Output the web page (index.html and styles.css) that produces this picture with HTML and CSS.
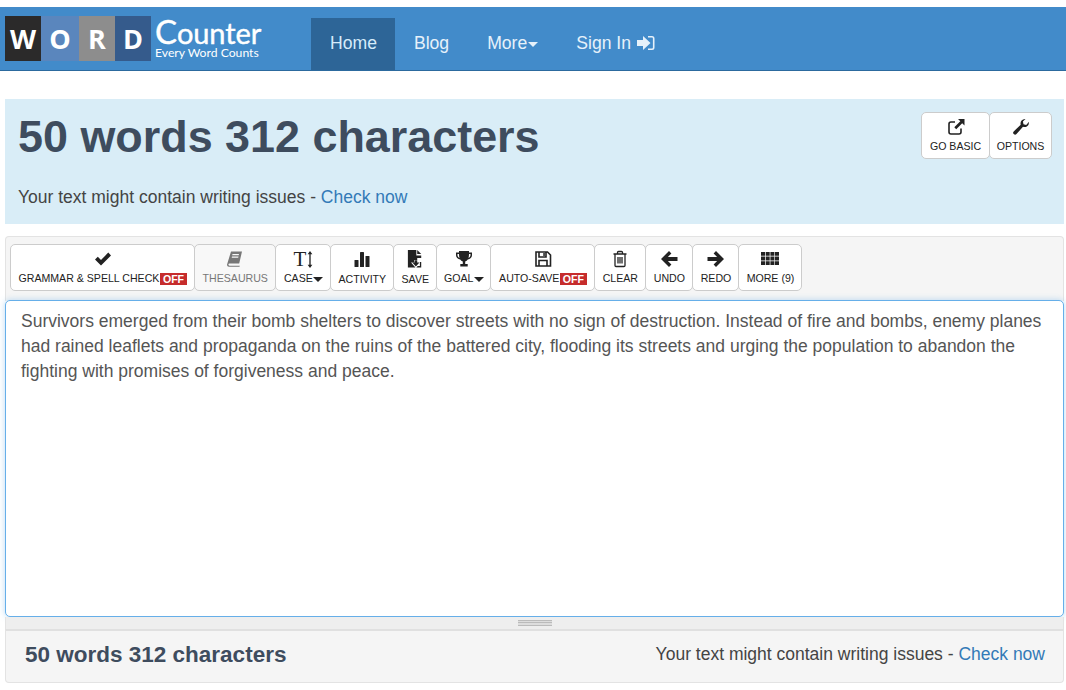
FILE: index.html
```html
<!DOCTYPE html>
<html lang="en">
<head>
<meta charset="utf-8">
<title>Word Counter</title>
<link rel="stylesheet" href="styles.css">
</head>
<body>
<nav class="navbar">
  <a class="logo" href="#">
    <span class="tiles">
      <span class="tile t-w">W</span><span class="tile t-o">O</span><span class="tile t-r">R</span><span class="tile t-d">D</span>
    </span>
    <span class="wordmark"><span class="wm-main"><span class="wm-c">C</span>ounter</span><span class="wm-sub">Every Word Counts</span></span>
  </a>
  <ul class="nav">
    <li class="nav-item active">Home</li>
    <li class="nav-item">Blog</li>
    <li class="nav-item">More<span class="caret nav-caret"></span></li>
    <li class="nav-item">Sign In<svg class="signin" viewBox="0 0 18 16"><path d="M0 5h6V1L13.500 8 6 15v-4H0z"/><path d="M11 1h4a2.500 2.500 0 0 1 2.500 2.500v9A2.500 2.500 0 0 1 15 15h-4v-1.600h4a.9.9 0 0 0 .9-.9v-9a.9.9 0 0 0-.9-.9h-4z"/></svg></li>
  </ul>
</nav>

<main class="page">
  <section class="summary">
    <div class="summary-top">
      <h1 class="count">50 words 312 characters</h1>
      <div class="tool-group">
        <button class="tool w-basic">
          <svg class="ico" viewBox="0 0 18 18"><path class="line" d="M14 10.500V14a2 2 0 0 1-2 2H4a2 2 0 0 1-2-2V6a2 2 0 0 1 2-2h4"/><path d="M11 1h6.500v6.500l-2.300-2.300-6 6-1.900-1.900 6-6z"/></svg>
          <span>GO BASIC</span>
        </button>
        <button class="tool w-options">
          <svg class="ico" viewBox="0 0 18 18"><path d="M17 4.500a4.500 4.500 0 0 1-6 4.300L4.500 16a1.900 1.900 0 0 1-2.800-2.600l7-6.700A4.500 4.500 0 0 1 13.500 1l-2.600 2.600.6 2.700 2.700.6L16.800 4z"/></svg>
          <span>OPTIONS</span>
        </button>
      </div>
    </div>
    <p class="issues">Your text might contain writing issues - <a href="#">Check now</a></p>
  </section>

  <div class="toolbar">
    <button class="tool">
      <svg class="ico" viewBox="0 0 18 18"><path d="M1 9.500l2.800-2.800 3.200 3.200 7.300-7.300L17 5.400 7 15.400z"/></svg>
      <span>GRAMMAR &amp; SPELL CHECK<b class="off">OFF</b></span>
    </button>
    <button class="tool muted">
      <svg class="ico" viewBox="0 0 18 18"><path d="M5 1.500h11l-2.800 12H3.500a1 1 0 0 0 0 2.200h10.300l-.3 1H3a2 2 0 0 1-1.800-2.600zM6.500 4l-.3 1.300h6.500L13 4zM6 6.500l-.3 1.300h6.500l.3-1.300z"/></svg>
      <span>THESAURUS</span>
    </button>
    <button class="tool">
      <span class="case-ico"><span class="case-t">T</span><svg class="case-arrow" viewBox="0 0 6 18"><path d="M3 0l2.500 3.500H3.700v11h1.800L3 18 .5 14.500h1.800v-11H.5z"/></svg></span>
      <span>CASE<span class="caret"></span></span>
    </button>
    <button class="tool low w-activity">
      <svg class="ico" viewBox="0 0 18 18"><rect x="1.500" y="10" width="4" height="7" rx=".6"/><rect x="7" y="2" width="4" height="15" rx=".6"/><rect x="12.500" y="6" width="4" height="11" rx=".6"/></svg>
      <span>ACTIVITY</span>
    </button>
    <button class="tool low w-save">
      <svg class="ico ico-tall" viewBox="0 0 18 20"><path d="M1 0h9.500v6H16v3h-4.500v2H8v3H4.500l5 5.500H1z"/><path d="M11.500 0L16 4.500h-4.500zM14.500 13.500H16V19.500H10.500L12 18h2.500zM8.500 11.500h3V14H14l-4 4.500L6 14h2.500z"/></svg>
      <span>SAVE</span>
    </button>
    <button class="tool w-goal">
      <svg class="ico" viewBox="0 0 18 18"><path d="M4 1h10v1.500h3v2.800c0 2.200-1.800 3.900-4.200 4.200-.6 1-1.500 1.700-2.600 2V14h2.500v2.500H5.300V14h2.500v-2.500c-1.100-.3-2-1-2.600-2C2.800 9.200 1 7.500 1 5.300V2.500h3zM2.500 4v1.300c0 1.200.8 2.200 2 2.600-.3-1-.5-2.300-.5-3.900zm13 0H14c0 1.600-.2 2.900-.5 3.900 1.200-.4 2-1.400 2-2.600z"/></svg>
      <span>GOAL<span class="caret"></span></span>
    </button>
    <button class="tool w-auto">
      <svg class="ico" viewBox="0 0 18 18"><path class="line" d="M2 2h11.500L16.500 5v11H2zM5 2v5h7V2M5 16v-5.500h8V16"/><rect x="9.300" y="3" width="1.500" height="3"/></svg>
      <span>AUTO-SAVE<b class="off">OFF</b></span>
    </button>
    <button class="tool w-clear">
      <svg class="ico" viewBox="0 0 18 18"><path class="thin" d="M2.500 4h13M6.500 4V2.500a1 1 0 0 1 1-1h3a1 1 0 0 1 1 1V4M4 4v11.500a1 1 0 0 0 1 1h8a1 1 0 0 0 1-1V4"/><path class="thin" d="M7 7v6.500M9 7v6.500M11 7v6.500"/></svg>
      <span>CLEAR</span>
    </button>
    <button class="tool">
      <svg class="ico" viewBox="0 0 18 18"><path d="M9 1l2.400 2.400-3.500 3.600H17.500v4H7.900l3.500 3.600L9 17 1 9z"/></svg>
      <span>UNDO</span>
    </button>
    <button class="tool w-redo">
      <svg class="ico" viewBox="0 0 18 18"><path d="M9 1L6.600 3.400 10.100 7H.5v4h9.600l-3.500 3.600L9 17l8-8z"/></svg>
      <span>REDO</span>
    </button>
    <button class="tool w-more">
      <svg class="ico" viewBox="0 0 18 18"><path d="M0 2h4v3.800H0zM4.700 2h4v3.800h-4zM9.400 2h4v3.800h-4zM14 2h4v3.800h-4zM0 6.600h4v3.800H0zM4.700 6.600h4v3.800h-4zM9.400 6.600h4v3.800h-4zM14 6.600h4v3.800h-4zM0 11.200h4V15H0zM4.700 11.200h4V15h-4zM9.400 11.200h4V15h-4zM14 11.200h4V15h-4z"/></svg>
      <span>MORE (9)</span>
    </button>
  </div>

  <div class="editor">Survivors emerged from their bomb shelters to discover streets with no sign of destruction. Instead of fire and bombs, enemy planes had rained leaflets and propaganda on the ruins of the battered city, flooding its streets and urging the population to abandon the fighting with promises of forgiveness and peace.</div>
  <div class="resizer"><span class="grip"></span></div>

  <footer class="foot">
    <strong class="foot-count">50 words 312 characters</strong>
    <span class="foot-issues">Your text might contain writing issues - <a href="#">Check now</a></span>
  </footer>
</main>
</body>
</html>
```
FILE: styles.css
```css
* { box-sizing: border-box; }
html, body { margin: 0; padding: 0; }
body {
  font-family: "Liberation Sans", Arial, sans-serif;
  color: #333;
  background: #fff;
  padding-top: 7px;
  overflow: hidden;
}
a { color: #337ab7; text-decoration: none; }

.navbar {
  display: flex;
  height: 64px;
  background: #428bca;
  border-bottom: 1px solid #2c6a9e;
}
.logo { display: flex; width: 311px; padding: 9px 0 0 5px; color: #fff; }
.tiles { display: flex; height: 45px; }
.tile {
  display: flex;
  align-items: center;
  justify-content: center;
  height: 45px;
  font-size: 27px;
  font-weight: 700;
  font-family: "Open Sans", sans-serif;
  color: #fff;
}
.t-w { width: 36px; background: #2b2a2a; }
.t-o { width: 38px; background: #5a86bd; }
.t-r { width: 36px; background: #8d8d8d; }
.t-d { width: 36px; background: #355b8c; }
.wordmark { display: flex; flex-direction: column; margin-left: 4px; font-family: "Lato", sans-serif; }
.wm-main { font-size: 29px; line-height: 30px; height: 30px; white-space: nowrap; letter-spacing: -.1px; -webkit-text-stroke: .4px #fff; }
.wm-c { font-size: 33px; }
.wm-sub { font-size: 12.200px; line-height: 13px; white-space: nowrap; }

.nav { display: flex; margin: 11px 0 0; padding: 0; list-style: none; height: 52px; }
.nav-item {
  display: flex;
  align-items: center;
  padding: 0 19px 2px;
  font-size: 17.600px;
  color: #e6f1fa;
  white-space: nowrap;
}
.nav-item.active { background: #2d6597; padding-right: 18px; color: #d6ecfa; }
.signin { width: 18px; height: 16px; margin-left: 6px; fill: #e6f1fa; }
.caret {
  display: inline-block;
  width: 0;
  height: 0;
  margin-left: 0;
  vertical-align: middle;
  border-top: 5px solid #222;
  border-left: 5px solid transparent;
  border-right: 5px solid transparent;
}
.caret.nav-caret { border-top-color: #e6f1fa; margin-left: 1px; margin-top: 2px; }

.page { padding: 28px 2px 0 5px; }

.summary { height: 125px; background: #d9edf7; padding: 13px 13px 0 13px; }
.summary-top { display: flex; justify-content: space-between; align-items: flex-start; height: 73px; }
.count { margin: 0; font-size: 44.900px; line-height: 50px; font-weight: 700; color: #3e4c5e; }
.tool-group { display: flex; }
.issues { margin: 0; font-size: 17.500px; line-height: 25px; color: #444; }

.toolbar {
  display: flex;
  height: 65px;
  margin-top: 12px;
  padding: 7px 4px 0;
  background: #f5f5f5;
  border: 1px solid #e3e3e3;
  border-bottom: 0;
  border-radius: 4px 4px 0 0;
}
.tool {
  display: flex;
  flex-direction: column;
  align-items: center;
  height: 47px;
  margin: 0 -1px 0 0;
  padding: 5px 7.500px 0;
  background: #fff;
  border: 1px solid #ccc;
  border-radius: 5px;
  color: #222;
  font-family: "Liberation Sans", Arial, sans-serif;
  font-size: 10.600px;
  line-height: 14px;
  white-space: nowrap;
}
.tool.muted { color: #777; background: #f8f8f8; }
.tool.low > span { margin-top: 1px; }
.w-basic { width: 69px; }
.w-options { width: 63px; }
.w-activity { width: 64px; }
.w-save { width: 44px; }
.w-goal { width: 55px; }
.w-auto { width: 105px; }
.w-clear { width: 52px; }
.w-redo { width: 47px; }
.w-more { width: 64px; }
.ico { display: block; width: 18px; height: 18px; margin-bottom: 3px; fill: currentColor; flex: none; }
.ico-tall { width: 16px; }
.line { fill: none; stroke: currentColor; stroke-width: 1.600; }
.thin { fill: none; stroke: currentColor; stroke-width: 1.300; }
.off {
  display: inline-block;
  height: 12px;
  margin-left: 1px;
  padding: 0 2.500px;
  background: #c62c2c;
  color: #fff;
  font-weight: 700;
  line-height: 12px;
  vertical-align: -1px;
}
.case-ico { display: flex; align-items: center; justify-content: center; height: 18px; margin-bottom: 3px; }
.case-t { font-family: "Liberation Serif", serif; font-size: 21px; line-height: 18px; }
.case-arrow { width: 6px; height: 17px; margin-left: 1px; fill: currentColor; }

.editor {
  height: 317px;
  margin-top: -1px;
  padding: 8px 15px;
  background: #fff;
  border: 1px solid #66afe9;
  border-radius: 5px;
  box-shadow: 0 0 6px rgba(102, 175, 233, .45);
  font-size: 17.500px;
  line-height: 25px;
  color: #555;
}
.resizer {
  display: flex;
  justify-content: center;
  align-items: center;
  height: 12px;
  background: #eee;
  border: 1px solid #e3e3e3;
  border-width: 0 1px;
}
.grip {
  width: 34px;
  height: 6px;
  border-top: 1px solid #bbb;
  border-bottom: 1px solid #bbb;
  background: linear-gradient(#ddd 0 1px, #bbb 1px 2px, #ddd 2px);
}
.foot {
  display: flex;
  justify-content: space-between;
  align-items: center;
  height: 54px;
  padding: 0 18px 4px 19px;
  background: #f5f5f5;
  border: 1px solid #e3e3e3;
  border-top: 2px solid #e0e0e0;
  border-radius: 0 0 4px 4px;
}
.foot-count { font-size: 22.500px; color: #3e4c5e; }
.foot-issues { font-size: 17.500px; color: #444; }
```
